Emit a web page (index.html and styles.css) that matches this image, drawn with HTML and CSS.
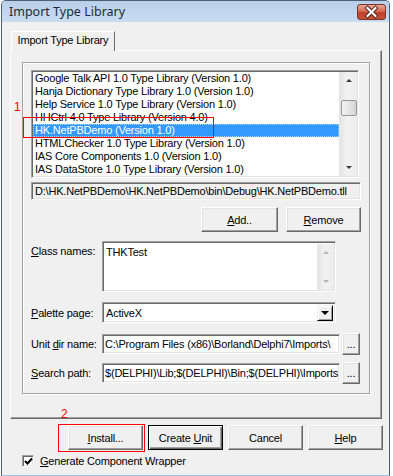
FILE: index.html
```html
<!DOCTYPE html>
<html lang="en">
<head>
  <meta charset="UTF-8">
  <title>Import Type Library</title>
  <link rel="stylesheet" href="styles.css">
</head>
<body>
  <div class="window">
    <div class="titlebar">
      <span class="title">Import Type Library</span>
      <div class="close">
        <svg width="27" height="14" viewBox="0 0 27 14">
          <path d="M9.5 3 L17.5 11 M17.5 3 L9.5 11" stroke="#4a1d14" stroke-width="4" stroke-linecap="square"/>
          <path d="M9.5 3 L17.5 11 M17.5 3 L9.5 11" stroke="#fff" stroke-width="2.2" stroke-linecap="square"/>
        </svg>
      </div>
    </div>

    <div class="client">
      <div class="tabs"><div class="tab">Import Type Library</div></div>

      <div class="page">
        <div class="group">
          <div class="listbox">
            <ul class="items">
              <li>Google Talk API 1.0 Type Library (Version 1.0)</li>
              <li>Hanja Dictionary Type Library 1.0 (Version 1.0)</li>
              <li>Help Service 1.0 Type Library (Version 1.0)</li>
              <li>HHCtrl 4.0 Type Library (Version 4.0)</li>
              <li class="selected">HK.NetPBDemo (Version 1.0)</li>
              <li>HTMLChecker 1.0 Type Library (Version 1.0)</li>
              <li>IAS Core Components 1.0 (Version 1.0)</li>
              <li>IAS DataStore 1.0 Type Library (Version 1.0)</li>
              <li>IAS Helper COM Component 1.0 Type Library (Version 1.0)</li>
            </ul>
            <div class="vscroll">
              <div class="arrow"><span class="tri-up"></span></div>
              <div class="thumb"></div>
              <div class="track"></div>
              <div class="arrow"><span class="tri-down"></span></div>
            </div>
          </div>

          <div class="pathbox">D:\HK.NetPBDemo\HK.NetPBDemo\bin\Debug\HK.NetPBDemo.tll</div>

          <div class="addrow">
            <button class="btn btn-add"><u>A</u>dd..</button>
            <button class="btn"><u>R</u>emove</button>
          </div>

          <div class="row row-memo">
            <label class="lbl lbl-top"><u>C</u>lass names:</label>
            <div class="memo">
              <span class="memo-text">THKTest</span>
              <div class="vscroll disabled">
                <div class="arrow"><span class="tri-up"></span></div>
                <div class="track"></div>
                <div class="arrow"><span class="tri-down"></span></div>
              </div>
            </div>
          </div>

          <div class="row row-combo">
            <label class="lbl"><u>P</u>alette page:</label>
            <div class="combo">
              <span class="combo-text">ActiveX</span>
              <div class="dropbtn"><span class="tri-down big"></span></div>
            </div>
          </div>

          <div class="row row-unit">
            <label class="lbl">Unit <u>d</u>ir name:</label>
            <div class="edit">C:\Program Files (x86)\Borland\Delphi7\Imports\</div>
            <button class="btn btn-dots">...</button>
          </div>

          <div class="row row-search">
            <label class="lbl"><u>S</u>earch path:</label>
            <div class="edit">$(DELPHI)\Lib;$(DELPHI)\Bin;$(DELPHI)\Imports;$(DELPHI)\Projects\Bpl</div>
            <button class="btn btn-dots">...</button>
          </div>
        </div>
      </div>

      <div class="actions">
        <button class="btn"><u>I</u>nstall...</button>
        <button class="btn btn-default">Create <u>U</u>nit</button>
        <button class="btn">Cancel</button>
        <button class="btn"><u>H</u>elp</button>
      </div>

      <label class="checkrow">
        <span class="checkbox">
          <svg width="9" height="9" viewBox="0 0 9 9">
            <path d="M1 4 L3.5 6.5 L8 1.5" fill="none" stroke="#000" stroke-width="2"/>
          </svg>
        </span>
        <span><u>G</u>enerate Component Wrapper</span>
      </label>
    </div>

    <!-- red annotations drawn over the dialog -->
    <div class="mark mark1"></div>
    <span class="num num1">1</span>
    <div class="mark mark2"></div>
    <span class="num num2">2</span>
  </div>
</body>
</html>
```

FILE: styles.css
```css
body {
  margin: 0;
  background: #fff;
}

.window {
  position: relative;
  width: 389px;
  height: 476px;
  margin-left: 1px;
  box-sizing: border-box;
  border: 1px solid #4f5f73;
  border-bottom: 1px solid #9cc3e8;
  border-radius: 5px 5px 0 0;
  background: #f0f0f0;
  overflow: hidden;
  font-family: "Liberation Sans", Arial, sans-serif;
  font-size: 11px;
  letter-spacing: -0.2px;
  color: #000;
}

.titlebar {
  display: flex;
  height: 21px;
  padding: 0 3px 0 7px;
  background: linear-gradient(#b8cfeb, #c9dcf2);
}

.title {
  align-self: center;
  font-family: "Noto Sans", sans-serif;
  font-size: 12.5px;
  letter-spacing: 0;
  color: #1e2a3a;
}

.close {
  margin-left: auto;
  margin-top: 3px;
  width: 27px;
  height: 14px;
  border: 1px solid #7c3325;
  border-radius: 3px;
  background: linear-gradient(#e9a796, #d46a52 45%, #c1402a 55%, #c9543a);
}

.close svg {
  display: block;
}

.client {
  padding: 9px 0 0 8px;
}

.tabs {
  display: flex;
  padding-left: 1px;
}

.tab {
  position: relative;
  z-index: 1;
  width: 104px;
  height: 20px;
  margin-bottom: -1px;
  box-sizing: border-box;
  border: 1px solid;
  border-color: #fff #696969 transparent #fff;
  border-bottom: 0;
  background: #f0f0f0;
  text-align: center;
  line-height: 17px;
}

.page {
  width: 372px;
  height: 369px;
  box-sizing: border-box;
  border: 1px solid;
  border-color: #fff #696969 #696969 #fff;
  box-shadow: inset -1px -1px #a0a0a0;
  padding: 11px;
}

.group {
  width: 348px;
  height: 332px;
  box-sizing: border-box;
  border: 1px solid #a0a0a0;
  box-shadow: inset 1px 1px #fff, 1px 1px #fff;
  padding: 7px 0 0 8px;
}

/* sunken controls */
.listbox,
.pathbox,
.memo,
.combo,
.edit,
.checkbox {
  box-sizing: border-box;
  border: 1px solid;
  border-color: #a0a0a0 #fff #fff #a0a0a0;
  box-shadow: inset 1px 1px #696969, inset -1px -1px #e3e3e3;
}

.listbox {
  display: flex;
  width: 328px;
  height: 108px;
  padding: 1px;
  background: #fff;
}

.items {
  flex: 1;
  margin: 0;
  padding: 0;
  list-style: none;
  overflow: hidden;
}

.items li {
  height: 13px;
  line-height: 13px;
  padding-left: 2px;
  white-space: nowrap;
}

.items li.selected {
  background: #3399ff;
  color: #fff;
  outline: 1px dotted #a8d2ff;
  outline-offset: -1px;
}

.vscroll {
  display: flex;
  flex-direction: column;
  width: 17px;
  border-left: 1px solid #e6e6e6;
  background: linear-gradient(to right, #e4e4e4, #f2f2f2 40%, #ececec);
}

.vscroll .arrow {
  display: flex;
  align-items: center;
  justify-content: center;
  height: 17px;
}

.vscroll .track {
  flex: 1;
}

.thumb {
  height: 14px;
  margin: 11px 0 0 1px;
  border: 1px solid #989898;
  border-radius: 2px;
  background: linear-gradient(to right, #f4f4f4, #e4e4e4 50%, #d4d4d4);
}

.tri-up,
.tri-down {
  width: 0;
  height: 0;
  border-left: 3px solid transparent;
  border-right: 3px solid transparent;
}

.tri-up {
  border-bottom: 3px solid #3a3a3a;
}

.tri-down {
  border-top: 3px solid #3a3a3a;
}

.disabled .tri-up {
  border-bottom-color: #b4b4b4;
}

.disabled .tri-down {
  border-top-color: #b4b4b4;
}

.tri-down.big {
  border-left-width: 4px;
  border-right-width: 4px;
  border-top: 4px solid #000;
}

.pathbox {
  width: 330px;
  height: 18px;
  margin-top: 4px;
  padding-left: 3px;
  line-height: 16px;
  white-space: nowrap;
  overflow: hidden;
}

.addrow {
  display: flex;
  justify-content: flex-end;
  gap: 8px;
  width: 330px;
  margin-top: 7px;
}

.btn {
  width: 75px;
  height: 25px;
  padding: 0;
  box-sizing: border-box;
  border: 1px solid;
  border-color: #fff #696969 #696969 #fff;
  box-shadow: inset -1px -1px #a0a0a0, inset 1px 1px #e3e3e3;
  background: #f0f0f0;
  font-family: "Liberation Sans", Arial, sans-serif;
  font-size: 11px;
  letter-spacing: -0.2px;
  color: #000;
}

.btn-add {
  width: 77px;
}

.btn-default {
  border-color: #000;
  box-shadow: inset 1px 1px #fff, inset -1px -1px #696969, inset -2px -2px #a0a0a0;
}

.btn-dots {
  width: 18px;
  height: 22px;
  margin-left: 2px;
  line-height: 16px;
}

.row {
  display: flex;
  align-items: center;
}

.lbl {
  width: 71px;
  flex-shrink: 0;
}

.lbl-top {
  align-self: flex-start;
  padding-top: 4px;
}

.row-memo {
  margin-top: 9px;
}

.row-combo,
.row-unit {
  margin-top: 10px;
}

.row-search {
  margin-top: 7px;
}

.memo {
  display: flex;
  width: 234px;
  height: 51px;
  padding: 2px 1px 1px 2px;
  background: #fff;
}

.memo-text {
  flex: 1;
  padding: 2px 0 0 1px;
}

.memo .vscroll {
  width: 16px;
}

.combo {
  display: flex;
  align-items: center;
  width: 234px;
  height: 21px;
  padding: 2px;
  background: #fff;
}

.combo-text {
  flex: 1;
  padding-left: 1px;
}

.dropbtn {
  display: flex;
  align-items: center;
  justify-content: center;
  width: 16px;
  height: 16px;
  box-sizing: border-box;
  border: 1px solid;
  border-color: #f0f0f0 #000 #000 #f0f0f0;
  box-shadow: inset 1px 1px #fff, inset -1px -1px #a0a0a0;
  background: #f0f0f0;
}

.edit {
  width: 238px;
  height: 20px;
  padding: 0 2px;
  line-height: 18px;
  background: #fff;
  white-space: nowrap;
  overflow: hidden;
}

.actions {
  display: flex;
  gap: 5px;
  margin-top: 6px;
  padding-left: 58px;
}

.checkrow {
  display: flex;
  align-items: center;
  gap: 6px;
  margin-top: 5px;
  padding-left: 12px;
}

.checkbox {
  display: flex;
  align-items: center;
  justify-content: center;
  width: 12px;
  height: 12px;
  background: #fff;
}

.checkbox svg {
  display: block;
}

.mark {
  position: absolute;
  border: 1px solid #f00;
}

.mark1 {
  left: 21px;
  top: 116px;
  width: 189px;
  height: 19px;
}

.mark2 {
  left: 56px;
  top: 423px;
  width: 85px;
  height: 26px;
}

.num {
  position: absolute;
  font-family: "Liberation Sans", Arial, sans-serif;
  font-size: 12px;
  letter-spacing: 0;
  color: #e00;
}

.num1 {
  left: 12px;
  top: 99px;
}

.num2 {
  left: 59px;
  top: 406px;
}
```
